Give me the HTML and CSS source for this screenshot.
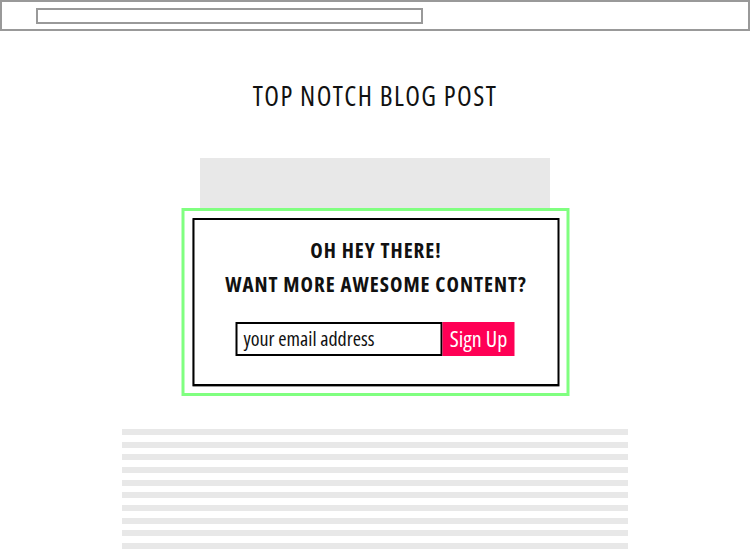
FILE: index.html
```html
<!DOCTYPE html>
<html>
<head>
<meta charset="utf-8">
<link rel="stylesheet" href="styles.css">
</head>
<body>
<div class="browserbar"><div class="urlbox"></div></div>
<h1 class="title">TOP NOTCH BLOG POST</h1>
<div class="hero"></div>
<div class="popup">
  <div class="popup-inner">
    <p class="pitch">OH HEY THERE!</p>
    <p class="pitch">WANT MORE AWESOME CONTENT?</p>
    <form class="signup">
      <div class="email">your email address</div>
      <div class="btn">Sign Up</div>
    </form>
  </div>
</div>
<div class="lines">
  <div class="line"></div><div class="line"></div><div class="line"></div><div class="line"></div><div class="line"></div>
  <div class="line"></div><div class="line"></div><div class="line"></div><div class="line"></div><div class="line"></div>
</div>
</body>
</html>
```
FILE: styles.css
```css
* { box-sizing: border-box; }
html, body { margin: 0; padding: 0; background: #fff; }
body { font-family: "Open Sans", sans-serif; font-stretch: 75%; color: #111; height: 550px; overflow: hidden; }
.browserbar { height: 31px; border: 2px solid #999; padding: 6px 0 0 34px; }
.urlbox { width: 387px; height: 16px; border: 2px solid #999; }
.title { margin: 50px 0 0; text-align: center; font-size: 27px; font-weight: 500; line-height: 30px; letter-spacing: 1.4px; white-space: nowrap; }
.hero { width: 350px; height: 50px; background: #e8e8e8; margin: 47px auto 0; }
.popup { width: 388px; height: 188px; margin: 0 auto; border: 3px solid #80ff80; padding: 7px 7px 7px 8px; transform: translateX(0.5px); }
.popup-inner { width: 367px; height: 168px; border: 2px solid #000; box-shadow: 0 1px 0 #999; padding-top: 13px; text-align: center; }
.pitch { margin: 0; font-weight: bold; font-size: 21px; line-height: 34px; letter-spacing: 1px; white-space: nowrap; }
.signup { display: flex; justify-content: center; margin: 21px 0 0 -2px; }
.email { width: 207px; height: 34px; border: 2px solid #000; text-align: left; padding-left: 6px; font-size: 20px; font-weight: 500; line-height: 30px; white-space: nowrap; }
.btn { width: 72px; height: 34px; background: #ff0055; color: #fff; font-size: 22px; font-weight: 500; line-height: 32px; text-align: center; white-space: nowrap; }
.lines { width: 506px; margin: 33px auto 0; display: flex; flex-direction: column; gap: 6.67px; }
.line { height: 6px; background: #e8e8e8; }
```
